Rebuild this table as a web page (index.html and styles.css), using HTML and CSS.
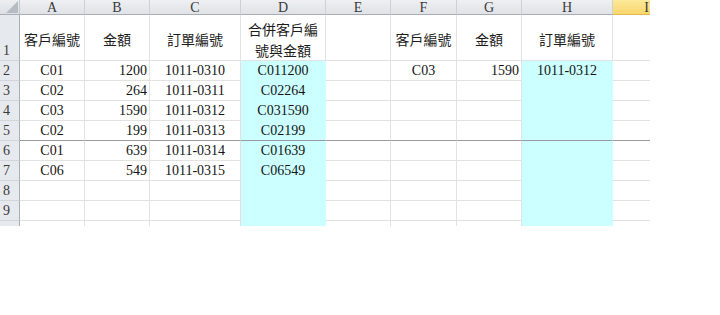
FILE: index.html
```html
<!DOCTYPE html>
<html lang="zh-Hant">
<head>
<meta charset="utf-8">
<title>Sheet</title>
<link rel="stylesheet" href="styles.css">
</head>
<body>
<div class="sheet">
  <!-- column headers -->
  <div class="corner"><svg width="19" height="14" viewBox="0 0 19 14"><polygon points="18,1 18,13 6,13" fill="#b7bcc3"/></svg></div>
  <div class="ch">A</div><div class="ch">B</div><div class="ch">C</div><div class="ch">D</div><div class="ch">E</div><div class="ch">F</div><div class="ch">G</div><div class="ch">H</div><div class="ch ch-sel">I</div>

  <!-- row 1 -->
  <div class="rh">1</div>
  <div class="c hd">客戶編號</div><div class="c hd">金額</div><div class="c hd">訂單編號</div><div class="c hd">合併客戶編<br>號與金額</div><div class="c"></div><div class="c hd">客戶編號</div><div class="c hd">金額</div><div class="c hd">訂單編號</div><div class="c last"></div>

  <!-- row 2 -->
  <div class="rh">2</div>
  <div class="c ctr">C01</div><div class="c num">1200</div><div class="c ctr">1011-0310</div><div class="c ctr fill">C011200</div><div class="c"></div><div class="c ctr">C03</div><div class="c num">1590</div><div class="c ctr fill">1011-0312</div><div class="c last"></div>

  <!-- row 3 -->
  <div class="rh">3</div>
  <div class="c ctr">C02</div><div class="c num">264</div><div class="c ctr">1011-0311</div><div class="c ctr fill">C02264</div><div class="c"></div><div class="c"></div><div class="c"></div><div class="c fill"></div><div class="c last"></div>

  <!-- row 4 -->
  <div class="rh">4</div>
  <div class="c ctr">C03</div><div class="c num">1590</div><div class="c ctr">1011-0312</div><div class="c ctr fill">C031590</div><div class="c"></div><div class="c"></div><div class="c"></div><div class="c fill"></div><div class="c last"></div>

  <!-- row 5 (page break below) -->
  <div class="rh">5</div>
  <div class="c ctr brk">C02</div><div class="c num brk">199</div><div class="c ctr brk">1011-0313</div><div class="c ctr fill brk">C02199</div><div class="c brk"></div><div class="c brk"></div><div class="c brk"></div><div class="c fill brk"></div><div class="c last brk"></div>

  <!-- row 6 -->
  <div class="rh">6</div>
  <div class="c ctr">C01</div><div class="c num">639</div><div class="c ctr">1011-0314</div><div class="c ctr fill">C01639</div><div class="c"></div><div class="c"></div><div class="c"></div><div class="c fill"></div><div class="c last"></div>

  <!-- row 7 -->
  <div class="rh">7</div>
  <div class="c ctr">C06</div><div class="c num">549</div><div class="c ctr">1011-0315</div><div class="c ctr fill">C06549</div><div class="c"></div><div class="c"></div><div class="c"></div><div class="c fill"></div><div class="c last"></div>

  <!-- row 8 -->
  <div class="rh">8</div>
  <div class="c"></div><div class="c"></div><div class="c"></div><div class="c fill"></div><div class="c"></div><div class="c"></div><div class="c"></div><div class="c fill"></div><div class="c last"></div>

  <!-- row 9 -->
  <div class="rh">9</div>
  <div class="c"></div><div class="c"></div><div class="c"></div><div class="c fill"></div><div class="c"></div><div class="c"></div><div class="c"></div><div class="c fill"></div><div class="c last"></div>

  <!-- row 10 (cut off) -->
  <div class="rh cut"></div>
  <div class="c cut"></div><div class="c cut"></div><div class="c cut"></div><div class="c fill cut"></div><div class="c cut"></div><div class="c cut"></div><div class="c cut"></div><div class="c fill cut"></div><div class="c last cut"></div>
</div>
</body>
</html>
```

FILE: styles.css
```css
html, body {
  margin: 0;
  padding: 0;
  background: #ffffff;
}

.sheet {
  display: grid;
  grid-template-columns: 20px 65px 65px 91px 85px 65px 66px 65px 91px 37px;
  grid-template-rows: 15px 46px repeat(8, 20px) 5px;
  width: 650px;
  font-family: "Liberation Serif", "Noto Sans CJK TC", serif;
  font-size: 14px;
  color: #141414;
}

.corner {
  box-sizing: border-box;
  background: linear-gradient(#eceef1, #dde0e5);
  border-right: 1px solid #c3c8cf;
  border-bottom: 1px solid #a9aeb6;
}

.corner svg {
  display: block;
}

.ch {
  box-sizing: border-box;
  display: flex;
  align-items: center;
  justify-content: center;
  background: linear-gradient(#eef0f3, #dfe2e6);
  border-right: 1px solid #cdd1d7;
  border-bottom: 1px solid #a9aeb6;
  color: #3a3a3a;
  line-height: 14px;
  padding-top: 1px;
}

.ch-sel {
  background: linear-gradient(#fde99a, #f8d66d);
  border-bottom-color: #e0b84e;
  border-right: none;
  justify-content: flex-end;
  padding-right: 1px;
}

.rh {
  box-sizing: border-box;
  display: flex;
  align-items: flex-end;
  padding-left: 3px;
  background: #e6e9ed;
  border-right: 1px solid #a9aeb6;
  border-bottom: 1px solid #d2d6db;
  color: #3a3a3a;
  line-height: 14px;
  padding-bottom: 2px;
}

.c {
  box-sizing: border-box;
  display: flex;
  align-items: flex-end;
  border-right: 1px solid #e2e2e2;
  border-bottom: 1px solid #e2e2e2;
  line-height: 14px;
  padding: 0 2px 2px 2px;
  white-space: nowrap;
}

.hd {
  align-items: center;
  justify-content: center;
  text-align: center;
  font-family: "Noto Sans CJK TC", sans-serif;
  line-height: 21px;
  padding-top: 4px;
  padding-bottom: 0;
  color: #1c1c1c;
}

.ctr {
  justify-content: center;
}

.num {
  justify-content: flex-end;
}

.fill {
  background: #ccffff;
  border-bottom-color: #ccffff;
  border-right-color: #ccffff;
}

.last {
  border-right: none;
}

.brk {
  border-bottom: 1px solid #9a9a9a;
}

.cut {
  border-bottom: none;
}
```
